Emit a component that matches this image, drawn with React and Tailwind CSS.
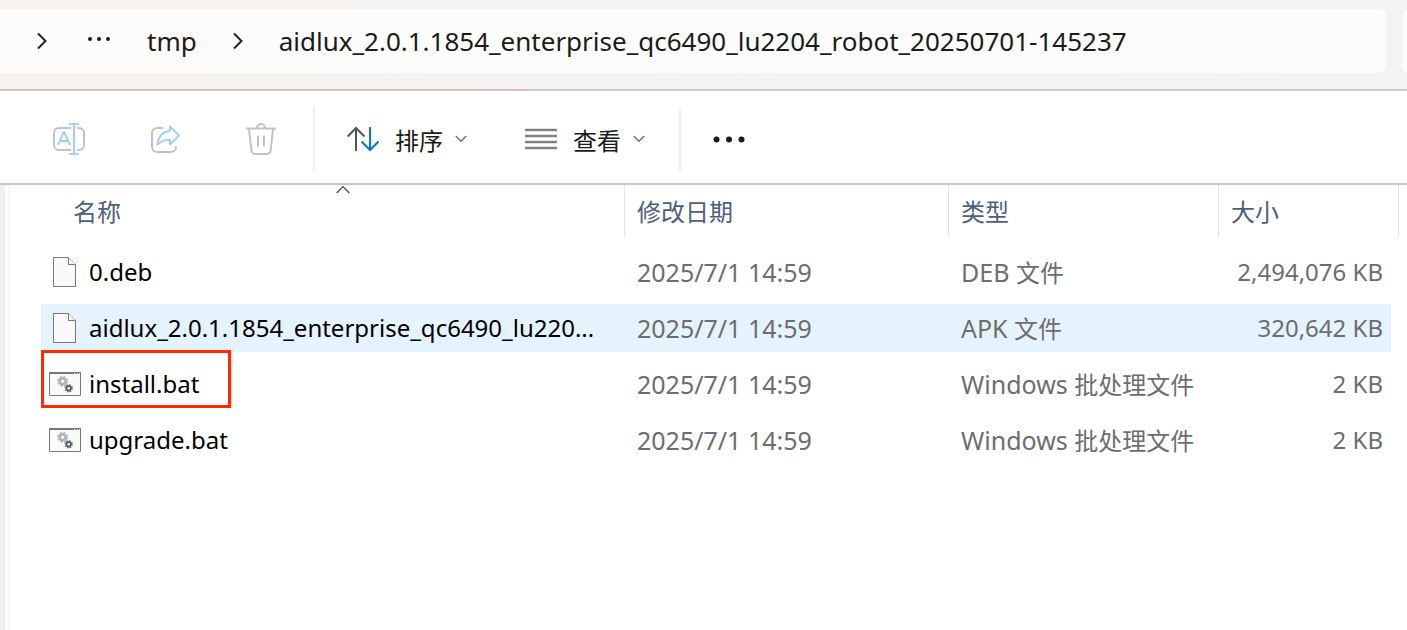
import React from 'react';

const files = [
  { name: '0.deb', date: '2025/7/1 14:59', kind: 'DEB', kindZh: '文件', size: '2,494,076 KB', icon: 'doc' },
  { name: 'aidlux_2.0.1.1854_enterprise_qc6490_lu220...', date: '2025/7/1 14:59', kind: 'APK', kindZh: '文件', size: '320,642 KB', icon: 'doc', selected: true },
  { name: 'install.bat', date: '2025/7/1 14:59', kind: 'Windows', kindZh: '批处理文件', size: '2 KB', icon: 'bat', marked: true },
  { name: 'upgrade.bat', date: '2025/7/1 14:59', kind: 'Windows', kindZh: '批处理文件', size: '2 KB', icon: 'bat' },
];

function CrumbArrow() {
  return (
    <svg width="10" height="18" viewBox="0 0 10 18" fill="none" stroke="#222" strokeWidth="2">
      <path d="M1 1.5 8.5 9 1 16.5" />
    </svg>
  );
}

function SmallChevron() {
  return (
    <svg width="12" height="8" viewBox="0 0 12 8" fill="none" stroke="#6b6b6b" strokeWidth="1.4">
      <path d="M0.8 1 6 6.2 11.2 1" />
    </svg>
  );
}

function RenameIcon() {
  return (
    <svg width="32" height="32" viewBox="0 0 32 32" fill="none" strokeWidth="2">
      <path d="M18 5H6a5 5 0 0 0-5 5v12a5 5 0 0 0 5 5h12M24 5h2a5 5 0 0 1 5 5v12a5 5 0 0 1-5 5h-2" stroke="#c2c2c2" />
      <path d="M16 1h10M16 31h10M21 1v30M5 22 10.5 9.5h1L17 22M7 18h8" stroke="#a4cff1" />
    </svg>
  );
}

function ShareIcon() {
  return (
    <svg width="32" height="32" viewBox="0 0 32 32" fill="none" strokeWidth="2" strokeLinejoin="round">
      <path d="M14 5H8a5 5 0 0 0-5 5v14a5 5 0 0 0 5 5h14a5 5 0 0 0 5-5v-1" stroke="#c2c2c2" />
      <path d="M21 3.5 30 12.500 21 21.500V17c-5.500-.500-9 1-12.500 4.500C9 14 13.500 8.500 21 8z" stroke="#a4cff1" />
    </svg>
  );
}

function TrashIcon() {
  return (
    <svg width="32" height="32" viewBox="0 0 32 32" fill="none" stroke="#c2c2c2" strokeWidth="2">
      <path d="M1 5.500h30M12 5a4 4 0 0 1 8 0M4 6l2.400 21.500A4 4 0 0 0 10.400 31h11.200a4 4 0 0 0 4-3.500L28 6M13 12.500v11M19 12.500v11" />
    </svg>
  );
}

function SortIcon() {
  return (
    <svg width="32" height="32" viewBox="0 0 32 32" fill="none" strokeWidth="2">
      <path d="M9 28V5M.700 13.500 9 5l8.500 8.500" stroke="#555" />
      <path d="M23 4v23M14.500 18.500 23 27l8.500-8.500" stroke="#0078d4" />
    </svg>
  );
}

function ViewIcon() {
  return (
    <svg width="32" height="32" viewBox="0 0 32 32" stroke="#838383" strokeWidth="2.500">
      <path d="M0 7h32M0 13h32M0 19h32M0 25h32" />
    </svg>
  );
}

function DocIcon() {
  return (
    <svg width="24" height="30" viewBox="0 0 24 30" fill="#fafafa" stroke="#777773" strokeWidth="1">
      <path d="M.5 .5h15l7 7v22H.5z" />
      <path d="M15.500.5v7h7" />
    </svg>
  );
}

function BatIcon() {
  return (
    <svg width="32" height="24" viewBox="0 0 32 24" fill="none">
      <rect x=".5" y=".5" width="31" height="23" rx=".5" fill="#fafafa" stroke="#777773" />
      <path d="M0 1h32" stroke="#777773" strokeWidth="2" />
      <path d="M25 1.500h1M27.500 1.500h1M30 1.500h1" stroke="#fff" />
      <circle cx="13.700" cy="9.300" r="2.900" stroke="#a9b2bc" strokeWidth="2.400" />
      <circle cx="13.700" cy="9.300" r="4.500" stroke="#a9b2bc" strokeWidth="1.800" strokeDasharray="2 1.534" />
      <circle cx="19.700" cy="16.300" r="2.200" stroke="#535f66" strokeWidth="1.800" />
      <circle cx="19.700" cy="16.300" r="3.400" stroke="#535f66" strokeWidth="1.500" strokeDasharray="1.500 1.170" />
    </svg>
  );
}

function AddressBar() {
  return (
    <header className="flex gap-4 overflow-hidden bg-linear-to-r from-[#f6f2ef] to-[#f2f3f5] pt-[9px] pb-4">
      <nav className="flex h-16 min-w-0 flex-1 items-center rounded-r-lg bg-linear-to-r from-[#fdfcfa] to-[#fbfcfc] pl-[37px] text-[26px] text-[#1b1b1b]">
        <CrumbArrow />
        <button aria-label="More folders" className="ml-10 -mt-1 flex w-6 justify-center">
          <svg width="24" height="6" viewBox="0 0 24 6" fill="#1b1b1b">
            <circle cx="3" cy="3" r="2" />
            <circle cx="12" cy="3" r="2" />
            <circle cx="21" cy="3" r="2" />
          </svg>
        </button>
        <a href="#tmp" className="ml-9">tmp</a>
        <span className="ml-9 mr-9"><CrumbArrow /></span>
        <a href="#current" className="truncate">aidlux_2.0.1.1854_enterprise_qc6490_lu2204_robot_20250701-145237</a>
      </nav>
      <div className="-mr-4 h-16 w-[21px] shrink-0 rounded-l-lg bg-[#fbfcfc]" />
    </header>
  );
}

function Rule() {
  return <div className="h-0.5 bg-linear-to-r from-[#d3c5bb] from-30% to-[#c8c8c8] to-50%" />;
}

function Toolbar() {
  return (
    <div className="flex h-[92px] items-center bg-white pt-1 pl-[21px] text-2xl text-[#1b1b1b]">
      <button aria-label="Rename" disabled className="flex w-24 justify-center"><RenameIcon /></button>
      <button aria-label="Share" disabled className="flex w-24 justify-center"><ShareIcon /></button>
      <button aria-label="Delete" disabled className="flex w-24 justify-center"><TrashIcon /></button>
      <div className="ml-1 mr-8 h-16 w-0.5 bg-[#efefef]" />
      <button className="flex items-center">
        <SortIcon />
        <span className="ml-4 mr-3 pt-1">排序</span>
        <SmallChevron />
      </button>
      <button className="ml-[58px] flex items-center">
        <ViewIcon />
        <span className="ml-4 mr-3 pt-1">查看</span>
        <SmallChevron />
      </button>
      <div className="ml-[34px] mr-8 h-16 w-0.5 bg-[#efefef]" />
      <button aria-label="See more">
        <svg width="32" height="8" viewBox="0 0 32 8" fill="#1b1b1b">
          <circle cx="3.500" cy="4.500" r="3" />
          <circle cx="16" cy="4.500" r="3" />
          <circle cx="28.500" cy="4.500" r="3" />
        </svg>
      </button>
    </div>
  );
}

function HeaderCell({ children, className }) {
  return (
    <th className="relative p-0 pb-[3px] text-left font-normal">
      <div className={`flex h-[52px] items-center border-r border-[#e2e2e2] pt-0.5 ${className}`}>{children}</div>
    </th>
  );
}

function FileRow({ file }) {
  return (
    <tr className={`h-12 ${file.selected ? 'bg-[#e5f3ff]' : ''}`}>
      <td className="relative p-0 pl-2 text-2xl leading-8">
        <div className="flex items-center gap-2 text-black">
          <span className="flex w-8 shrink-0 justify-center">
            {file.icon === 'doc' ? <DocIcon /> : <BatIcon />}
          </span>
          <span className="whitespace-nowrap">{file.name}</span>
        </div>
        {file.marked && (
          <div className="absolute -top-[10px] left-0 h-[58px] w-[190px] border-3 border-[#ff2a00]" />
        )}
      </td>
      <td className="p-0 pl-3">{file.date}</td>
      <td className="p-0 pl-3 whitespace-nowrap">
        {file.kind} <span className="text-2xl">{file.kindZh}</span>
      </td>
      <td className="p-0 pr-2 text-right text-2xl leading-8 whitespace-nowrap">{file.size}</td>
    </tr>
  );
}

export default function App() {
  return (
    <div className="flex min-h-screen flex-col bg-white font-['Noto_Sans','Noto_Sans_CJK_SC',sans-serif]">
      <AddressBar />
      <Rule />
      <Toolbar />
      <Rule />
      <div className="flex flex-1">
        <div className="w-[5px] bg-[#f0f0f0]" />
        <div className="ml-[3px] w-0.5 bg-[#f7f7f7]" />
        <main className="min-w-0 flex-1 pl-[31px] pr-4">
          <table className="-mt-2 w-full table-fixed border-separate border-spacing-x-0 border-spacing-y-2 text-[25px] leading-8 text-[#6d6d6d]">
            <colgroup>
              <col />
              <col className="w-[324px]" />
              <col className="w-[270px]" />
              <col className="w-[172px]" />
            </colgroup>
            <thead className="text-2xl text-[#4c607a]">
              <tr>
                <HeaderCell className="pl-8">
                  <button>名称</button>
                  <span className="absolute inset-x-0 top-0 flex justify-center pl-5">
                    <svg width="14" height="9" viewBox="0 0 14 9" fill="none" stroke="#444" strokeWidth="1.200">
                      <path d="M.700 8 7 1.700 13.300 8" />
                    </svg>
                  </span>
                </HeaderCell>
                <HeaderCell className="pl-3"><button>修改日期</button></HeaderCell>
                <HeaderCell className="pl-3"><button>类型</button></HeaderCell>
                <HeaderCell className="-mr-2 pl-3"><button>大小</button></HeaderCell>
              </tr>
            </thead>
            <tbody>
              {files.map((file) => (
                <FileRow key={file.name} file={file} />
              ))}
            </tbody>
          </table>
        </main>
      </div>
    </div>
  );
}
